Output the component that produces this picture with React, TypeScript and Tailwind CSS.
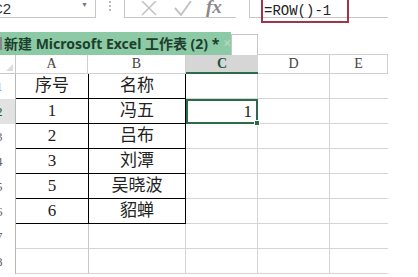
const cols = [
  { key: 'A', w: 'w-[72px]' },
  { key: 'B', w: 'w-[98px]' },
  { key: 'C', w: 'w-[72px]' },
  { key: 'D', w: 'w-[72px]' },
  { key: 'E', w: 'w-[58px]' },
];

const rows: { n: number; a?: string; b?: string }[] = [
  { n: 1, a: '序号', b: '名称' },
  { n: 2, a: '1', b: '冯五' },
  { n: 3, a: '2', b: '吕布' },
  { n: 4, a: '3', b: '刘潭' },
  { n: 5, a: '5', b: '吴晓波' },
  { n: 6, a: '6', b: '貂蝉' },
  { n: 7 },
  { n: 8 },
];

const song = { fontFamily: '"Liberation Serif", "Noto Sans CJK SC", serif' };

export default function App() {
  return (
    <div className="w-[418px] h-[277px] overflow-hidden bg-white relative" style={song}>
      {/* Formula bar */}
      <div className="flex h-[18px] items-stretch">
        <div className="w-[96px] border-r border-b border-[#c6c6c6] flex items-center justify-between overflow-hidden">
          <span className="-ml-[8px] text-[15px] text-[#333] leading-none" style={{ fontFamily: '"Liberation Sans", sans-serif' }}>C2</span>
          <span className="mr-[7px] -mt-[6px] text-[7px] text-[#777]">▼</span>
        </div>
        <div className="w-[28px] flex flex-col items-center justify-start gap-[2px] pt-[1px]">
          <span className="w-[2px] h-[2px] bg-[#bbb]" />
          <span className="w-[2px] h-[2px] bg-[#bbb]" />
          <span className="w-[2px] h-[2px] bg-[#bbb]" />
        </div>
        <div className="w-[112px] border-l border-b border-[#c6c6c6] flex items-center">
          <svg width="22" height="16" viewBox="0 0 22 16" className="ml-[14px]">
            <path d="M3 0 L17 14 M17 0 L3 14" stroke="#c4c4c4" strokeWidth="1.6" fill="none" />
          </svg>
          <svg width="20" height="16" viewBox="0 0 20 16" className="ml-[12px]">
            <path d="M2 7 L8 14 L18 0" stroke="#c4c4c4" strokeWidth="2" fill="none" />
          </svg>
          <span className="ml-[13px] -mt-[4px] text-[19px] italic font-bold text-[#8a8a8a] leading-none">fx</span>
        </div>
        <div className="w-[14px] border-r border-[#c6c6c6]" />
        <div className="w-[138px] border-b border-[#c6c6c6] relative">
          <div className="absolute left-[11px] -top-[2px] w-[88px] h-[25px] border-2 border-[#9e3548] flex items-center">
            <span className="pl-[1px] text-[14px] text-[#222] leading-none" style={{ fontFamily: '"Liberation Mono", monospace' }}>=ROW()-1</span>
          </div>
        </div>
      </div>

      {/* Sheet tabs */}
      <div className="mt-[14px] flex h-[23px] items-end">
        <div className="w-[231px] h-[23px] bg-[#8ccaa6] flex items-center">
          <span className="w-[5px] h-[13px] border border-[#888] bg-white" />
          <span className="ml-[2px] text-[14px] font-bold text-[#1d3f2c] whitespace-nowrap" style={{ fontFamily: '"Noto Sans", "Noto Sans CJK SC", sans-serif' }}>
            新建 Microsoft Excel 工作表 (2) *
          </span>
          <span className="ml-[4px] text-[14px] font-bold text-[#b9dac7]">×</span>
        </div>
        <div className="w-[27px] h-[21px] border border-b-0 border-[#c6c6c6]" />
        <div className="w-[130px] border-b border-[#d0d0d0]" />
      </div>

      {/* Grid */}
      <div className="flex flex-col">
        <div className="flex h-[19px]">
          <div className="w-[16px] border-r border-b border-[#c8c8c8] flex items-end justify-end">
            <span className="w-0 h-0 border-l-[7px] border-l-transparent border-b-[7px] border-b-[#dcdcdc] mr-[2px] mb-[2px]" />
          </div>
          {cols.map((c) => (
            <div
              key={c.key}
              className={`${c.w} flex items-center justify-center text-[14px] leading-none ${
                c.key === 'C'
                  ? 'bg-[#d6d6d6] border-b-2 border-[#2c6b48] text-[#1f5a38] font-bold'
                  : 'border-b border-r border-[#d0d0d0] text-[#444]'
              }`}
            >
              {c.key}
            </div>
          ))}
        </div>
        {rows.map((r) => (
          <div key={r.n} className="flex h-[25px]">
            <div className={`w-[16px] border-r border-[#b8b8b8] overflow-hidden flex items-center ${r.n === 2 ? 'bg-[#e2e2e2]' : ''}`}>
              <span className={`-ml-[4px] text-[13px] ${r.n === 2 ? 'text-[#1f5a38]' : 'text-[#666]'}`}>{r.n}</span>
            </div>
            <div
              className={`w-[72px] flex items-center justify-center text-[17px] text-[#222] ${
                r.n <= 6 ? 'border-b border-black' : 'border-b border-[#d4d4d4]'
              }`}
            >
              {r.a}
            </div>
            <div
              className={`w-[98px] flex items-center justify-center text-[17px] text-[#222] border-l ${
                r.n <= 6 ? 'border-b border-black border-l-black border-r border-r-black' : 'border-b border-[#d4d4d4] border-l-[#c8c8c8] border-r border-r-[#d4d4d4]'
              }`}
            >
              {r.b}
            </div>
            {r.n === 2 ? (
              <div className="w-[72px] relative border-2 border-[#2c6b48] flex items-center justify-end pr-[4px] text-[17px] text-[#222]">
                1
                <span className="absolute -right-[4px] -bottom-[4px] w-[6px] h-[6px] bg-[#2c6b48] border border-white" />
              </div>
            ) : (
              <div className="w-[72px] border-b border-r border-[#d4d4d4]" />
            )}
            <div className="w-[72px] border-b border-r border-[#d4d4d4]" />
            <div className="w-[58px] border-b border-[#d4d4d4]" />
          </div>
        ))}
      </div>
    </div>
  );
}
